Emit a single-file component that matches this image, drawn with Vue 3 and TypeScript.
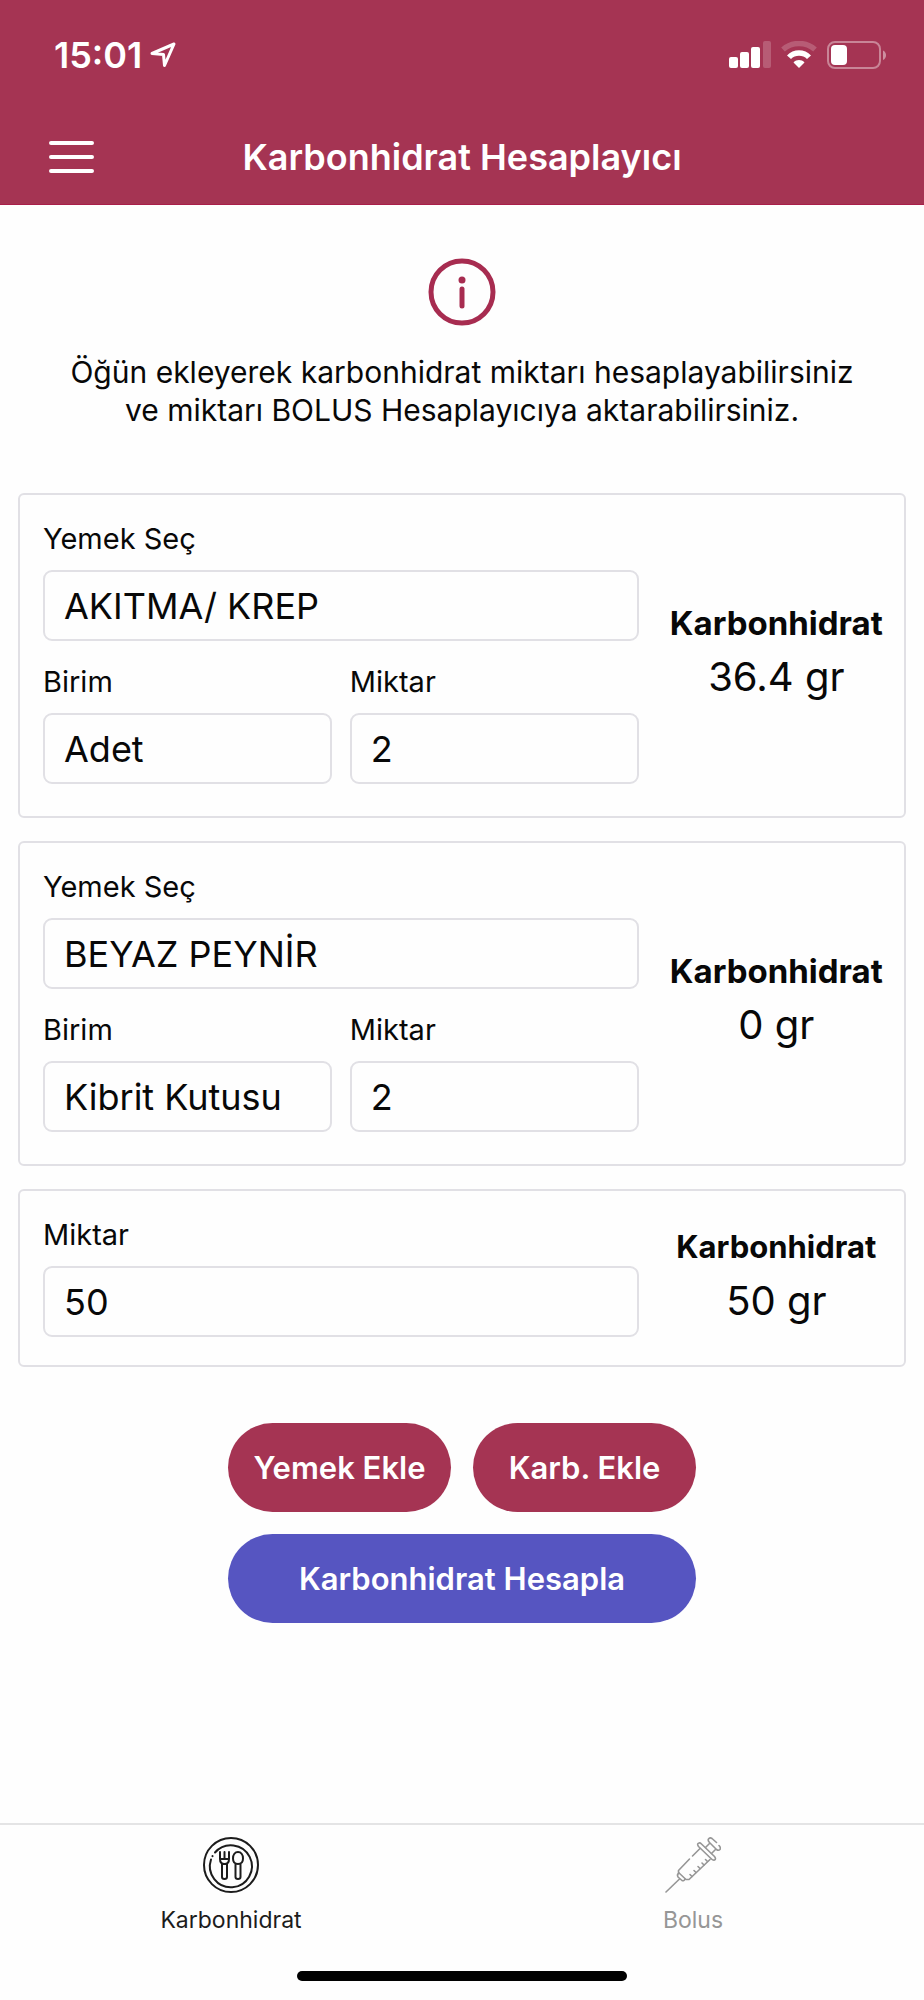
<script setup lang="ts">
import { ref } from 'vue'

interface Meal {
  food: string
  unit: string
  amount: string
  carbs: number
}

const meals = ref<Meal[]>([
  { food: 'AKITMA/ KREP', unit: 'Adet', amount: '2', carbs: 36.4 },
  { food: 'BEYAZ PEYNİR', unit: 'Kibrit Kutusu', amount: '2', carbs: 0 },
])
const foods = ['AKITMA/ KREP', 'BEYAZ PEYNİR']
const units = ['Adet', 'Kibrit Kutusu']
const extraCarbs = ref('50')
</script>

<template>
  <div class="screen">
    <header class="header">
      <div class="status">
        <div class="clock">
          <span>15:01</span>
          <svg width="26" height="26" viewBox="0 0 26 26" aria-hidden="true">
            <path d="M2 11.500 24 2 14.500 23.500 13.500 12.500Z" fill="none" stroke="#fff" stroke-width="3" stroke-linejoin="round" />
          </svg>
        </div>
        <div class="indicators">
          <svg width="42" height="28" viewBox="0 0 42 28" aria-hidden="true" fill="#fff">
            <rect x="0" y="16" width="9" height="11" rx="2" />
            <rect x="11" y="11" width="9" height="16" rx="2" />
            <rect x="22" y="6" width="9" height="21" rx="2" />
            <rect x="34" y="0" width="8" height="27" rx="2" opacity="0.2" />
          </svg>
          <svg width="36" height="28" viewBox="0 0 36 28" aria-hidden="true">
            <path d="M2 8.500C11 .5 25 .5 34 8.500" fill="none" stroke="#fff" stroke-opacity="0.2" stroke-width="5.500" />
            <path d="M6 14.500C12 7.500 24 7.500 30 14.500L26 18C22 13.800 14 13.800 10 18Z" fill="#fff" />
            <path d="M18 27 12.500 21.500C15.500 18.300 20.500 18.300 23.500 21.500Z" fill="#fff" />
          </svg>
          <svg width="60" height="28" viewBox="0 0 60 28" aria-hidden="true">
            <rect x="1" y="1" width="52" height="26" rx="7" fill="none" stroke="#fff" stroke-opacity="0.4" stroke-width="2" />
            <rect x="4" y="4" width="16" height="20" rx="4" fill="#fff" />
            <path d="M56 9.500C60 11 60 17.500 56 19Z" fill="#fff" fill-opacity="0.45" />
          </svg>
        </div>
      </div>
      <div class="nav">
        <button class="menu" type="button" aria-label="Menü">
          <svg width="46" height="34" viewBox="0 0 46 34" stroke="#fff" stroke-width="4" stroke-linecap="round">
            <path d="M2 3H43M2 17H43M2 31H43" />
          </svg>
        </button>
        <h1>Karbonhidrat Hesaplayıcı</h1>
      </div>
    </header>

    <main class="main">
      <section class="intro">
        <svg width="68" height="68" viewBox="0 0 68 68" aria-hidden="true">
          <circle cx="34" cy="34" r="31" fill="none" stroke="#a72c50" stroke-width="5" />
          <circle cx="34" cy="22" r="3.500" fill="#a72c50" />
          <path d="M34 31V48" stroke="#a72c50" stroke-width="5" stroke-linecap="round" />
        </svg>
        <p>Öğün ekleyerek karbonhidrat miktarı hesaplayabilirsiniz ve miktarı BOLUS Hesaplayıcıya aktarabilirsiniz.</p>
      </section>

      <form class="cards" @submit.prevent>
        <section v-for="(meal, i) in meals" :key="i" class="card">
          <div class="fields">
            <div class="field wide">
              <label :for="`food-${i}`">Yemek Seç</label>
              <select :id="`food-${i}`" v-model="meal.food">
                <option v-for="f in foods" :key="f">{{ f }}</option>
              </select>
            </div>
            <div class="field">
              <label :for="`unit-${i}`">Birim</label>
              <select :id="`unit-${i}`" v-model="meal.unit">
                <option v-for="u in units" :key="u">{{ u }}</option>
              </select>
            </div>
            <div class="field">
              <label :for="`amount-${i}`">Miktar</label>
              <input :id="`amount-${i}`" v-model="meal.amount" type="text" inputmode="decimal">
            </div>
          </div>
          <div class="result">
            <strong>Karbonhidrat</strong>
            <span>{{ meal.carbs }} gr</span>
          </div>
        </section>

        <section class="card short">
          <div class="fields">
            <div class="field wide">
              <label for="extra">Miktar</label>
              <input id="extra" v-model="extraCarbs" type="text" inputmode="decimal">
            </div>
          </div>
          <div class="result">
            <strong>Karbonhidrat</strong>
            <span>{{ extraCarbs }} gr</span>
          </div>
        </section>

        <div class="actions">
          <button type="button">Yemek Ekle</button>
          <button type="button">Karb. Ekle</button>
          <button class="primary" type="submit">Karbonhidrat Hesapla</button>
        </div>
      </form>
    </main>

    <nav class="tabs">
      <a class="tab active" href="#karbonhidrat" aria-current="page">
        <svg width="56" height="56" viewBox="0 0 56 56" fill="none" stroke="currentColor" stroke-width="2" stroke-linecap="round" stroke-linejoin="round" aria-hidden="true">
          <circle cx="28" cy="28" r="27" />
          <path d="M12 15.500A21 21 0 1 1 8 22.500M9.500 19V19.200" />
          <path d="M17 15V22Q17 27 21.500 27Q26 27 26 22V15M21.500 15V22M17 22H26M19 27V40Q19 42 21.500 42Q24 42 24 40V27" />
          <path d="M35 27C31 27 30 24 30 21.500C30 18 32 15 35 15C38 15 40 18 40 21.500C40 24 39 27 35 27ZM32.500 27V40Q32.500 42 35 42Q37.500 42 37.500 40V27" />
        </svg>
        <span>Karbonhidrat</span>
      </a>
      <a class="tab" href="#bolus">
        <svg width="56" height="56" viewBox="0 0 56 56" fill="none" stroke="currentColor" stroke-width="1.600" stroke-linecap="round" stroke-linejoin="round" aria-hidden="true">
          <path d="M1 55 14.500 42" />
          <path d="M14 36Q11.500 37.500 13 40L17 43.500Q19 44.500 20 42" />
          <path d="M24.500 22 13.500 33.500V35.500L21 42.500H24L45 22.500M27.500 19 35 11.500" />
          <path d="M27 39.500 25 37.500M31 35.500 29 33.500M35 31.500 33 29.500M39 28 37 26M42.500 24.500 40.500 22.500" />
          <path d="M33.500 9.500Q31.500 6.500 34 6Q35 5.500 36.500 7L49.500 19.500Q51.500 22 49.500 23Q48 23.500 46.500 22Z" />
          <path d="M40.500 10.500 44.500 6.500M46.500 16.500 50.500 12.500" />
          <path d="M51.500 5.500 47 1.500Q45 0 43.500 2Q42.500 3.500 44.500 5.500L51.500 12.500Q53.500 14 55 12.500Q56 10.500 54 8.500" />
        </svg>
        <span>Bolus</span>
      </a>
    </nav>
    <div class="home"><i></i></div>
  </div>
</template>

<style>
body {
  margin: 0;
  background: #fefefe;
}
</style>

<style scoped>
.screen {
  display: flex;
  flex-direction: column;
  min-height: 100vh;
  background: #fefefe;
  color: #080808;
  font-family: Inter, "Liberation Sans", sans-serif;
}
.header {
  background: #a53453;
  color: #fff;
  border-bottom: 1px solid #a91e49;
}
.status {
  display: flex;
  justify-content: space-between;
  align-items: center;
  height: 110px;
  padding: 0 37px 0 54px;
}
.clock {
  display: flex;
  align-items: center;
  gap: 8px;
  font-size: 36px;
  font-weight: 600;
}
.indicators {
  display: flex;
  align-items: center;
  gap: 10px;
}
.nav {
  display: grid;
  grid-template-columns: 1fr auto 1fr;
  align-items: center;
  height: 94px;
  padding: 0 49px;
}
.nav h1 {
  margin: 0;
  font-size: 36px;
  line-height: 44px;
  font-weight: 600;
}
.menu {
  justify-self: start;
  display: flex;
  padding: 0;
  border: 0;
  background: none;
}
.main {
  flex: 1;
  padding: 0 18px;
}
.intro {
  display: flex;
  flex-direction: column;
  align-items: center;
  padding: 53px 40px 64px;
}
.intro p {
  max-width: 810px;
  margin: 27px 0 0;
  font-size: 30px;
  line-height: 38px;
  text-align: center;
}
.cards {
  display: flex;
  flex-direction: column;
  gap: 23px;
}
.card {
  display: grid;
  grid-template-columns: minmax(0, 7fr) minmax(0, 3fr);
  column-gap: 10px;
  align-items: center;
  padding: 22px 0 32px 23px;
  border: 2px solid #e1e0e5;
  border-radius: 6px;
}
.card.short {
  padding-bottom: 28px;
}
.fields {
  display: grid;
  grid-template-columns: 1fr 1fr;
  gap: 19px 18px;
}
.field {
  display: flex;
  flex-direction: column;
  min-width: 0;
}
.wide {
  grid-column: 1 / -1;
}
label {
  margin-bottom: 9px;
  font-size: 29px;
  line-height: 44px;
}
input,
select {
  appearance: none;
  box-sizing: border-box;
  width: 100%;
  height: 71px;
  padding: 0 19px;
  border: 2px solid #e1e0e5;
  border-radius: 9px;
  background: #fefefe;
  color: #080808;
  font: 36px Inter, "Liberation Sans", sans-serif;
}
.result {
  display: flex;
  flex-direction: column;
  align-items: center;
  gap: 4px;
}
.result strong {
  font-size: 33px;
  line-height: 48px;
  font-weight: 700;
}
.short .result strong {
  font-size: 31px;
}
.result span {
  font-size: 40px;
  line-height: 52px;
}
.actions {
  display: grid;
  grid-template-columns: 1fr 1fr;
  gap: 22px;
  width: 468px;
  margin: 33px auto 0;
}
.actions button {
  height: 89px;
  padding: 0;
  border: 0;
  border-radius: 45px;
  background: #a53453;
  color: #fff;
  font: 600 31px Inter, "Liberation Sans", sans-serif;
}
.actions .primary {
  grid-column: 1 / -1;
  background: #5655c1;
}
.tabs {
  display: flex;
  border-top: 2px solid #e4e4e5;
}
.tab {
  flex: 1;
  display: flex;
  flex-direction: column;
  align-items: center;
  gap: 12px;
  padding: 12px 0 0;
  color: #969696;
  font-size: 23px;
  line-height: 30px;
  text-decoration: none;
}
.tab.active {
  color: #1c1c1c;
}
.home {
  display: flex;
  justify-content: center;
  padding: 36px 0 19px;
}
.home i {
  width: 330px;
  height: 10px;
  border-radius: 5px;
  background: #000;
}
</style>
